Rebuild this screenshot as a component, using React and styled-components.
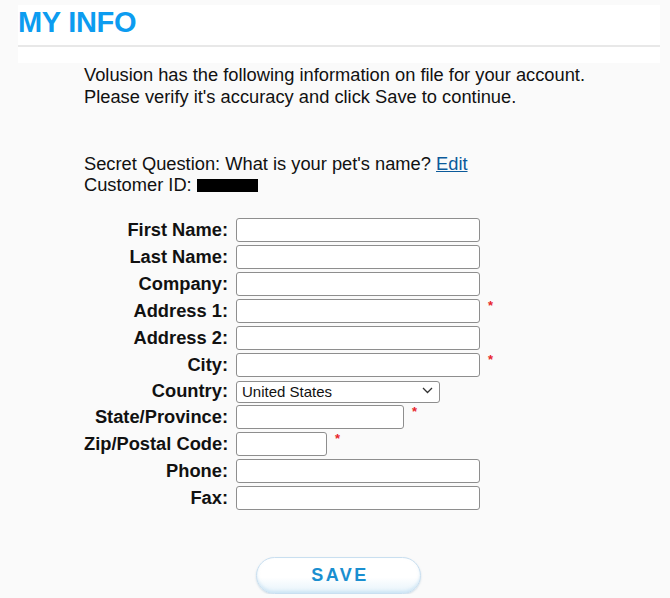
import React from 'react';
import styled, { createGlobalStyle } from 'styled-components';

const GlobalStyle = createGlobalStyle`
  body {
    margin: 0;
    background: #fafafa;
    font-family: "Liberation Sans", Arial, sans-serif;
    color: #111;
  }
`;

const fields = [
  { label: 'First Name:', width: 244 },
  { label: 'Last Name:', width: 244 },
  { label: 'Company:', width: 244 },
  { label: 'Address 1:', width: 244, required: true },
  { label: 'Address 2:', width: 244 },
  { label: 'City:', width: 244, required: true },
  { label: 'Country:', select: true, width: 204 },
  { label: 'State/Province:', width: 168, required: true },
  { label: 'Zip/Postal Code:', width: 91, required: true },
  { label: 'Phone:', width: 244 },
  { label: 'Fax:', width: 244 },
];

function Chevron() {
  return (
    <svg width="11" height="7" viewBox="0 0 11 7" fill="none">
      <path d="M1 1l4.5 4.5L10 1" stroke="#333" strokeWidth="1.3" />
    </svg>
  );
}

export default function App() {
  return (
    <>
      <GlobalStyle />
      <Header>
        <Title>MY INFO</Title>
        <HeaderRule />
      </Header>
      <Content>
        <Intro>
          Volusion has the following information on file for your account.
          <br />
          Please verify it's accuracy and click Save to continue.
        </Intro>
        <AccountInfo>
          Secret Question: What is your pet's name? <EditLink href="#">Edit</EditLink>
          <br />
          Customer ID: <Redacted />
        </AccountInfo>
        <Form>
          {fields.map((f) => (
            <Row key={f.label}>
              <Label>{f.label}</Label>
              <Field>
                {f.select ? (
                  <SelectWrap>
                    <Select $width={f.width} defaultValue="US">
                      <option value="US">United States</option>
                    </Select>
                    <SelectArrow>
                      <Chevron />
                    </SelectArrow>
                  </SelectWrap>
                ) : (
                  <Input type="text" $width={f.width} />
                )}
                {f.required && <Required>*</Required>}
              </Field>
            </Row>
          ))}
        </Form>
        <SaveRow>
          <SaveButton type="button">SAVE</SaveButton>
        </SaveRow>
      </Content>
    </>
  );
}

const Header = styled.div`
  margin: 5px 10px 0 18px;
  background: #fff;
`;

const Title = styled.h1`
  margin: 0;
  height: 40px;
  padding-top: 1px;
  box-sizing: border-box;
  font-size: 29px;
  font-weight: 700;
  line-height: 33px;
  color: #0c9cf0;
  letter-spacing: -0.3px;
`;

const HeaderRule = styled.div`
  height: 16px;
  border-top: 2px solid #e8e8e8;
`;

const Content = styled.div`
  padding-left: 84px;
  font-size: 18.3px;
`;

const Intro = styled.p`
  margin: 1px 0 0;
  line-height: 22px;
`;

const AccountInfo = styled.p`
  margin: 45px 0 0;
  line-height: 21px;
`;

const EditLink = styled.a`
  color: #0b5a9a;
  text-decoration: underline;
`;

const Redacted = styled.span`
  display: inline-block;
  width: 61px;
  height: 13px;
  background: #000;
  vertical-align: -1px;
`;

const Form = styled.div`
  margin-top: 23px;
  display: flex;
  flex-direction: column;
  gap: 3px;
`;

const Row = styled.div`
  display: flex;
  align-items: center;
  gap: 8px;
`;

const Label = styled.div`
  width: 144px;
  height: 22px;
  line-height: 22px;
  text-align: right;
  font-weight: 700;
  white-space: nowrap;
`;

const Field = styled.div`
  display: flex;
  align-items: flex-start;
`;

const Input = styled.input`
  width: ${(p) => p.$width}px;
  height: 24px;
  box-sizing: border-box;
  border: 1px solid #8e8e8e;
  border-radius: 3px;
  background: #fff;
  margin: 0;
`;

const SelectWrap = styled.div`
  position: relative;
  height: 22px;
`;

const Select = styled.select`
  appearance: none;
  width: ${(p) => p.$width}px;
  height: 22px;
  box-sizing: border-box;
  border: 1px solid #8e8e8e;
  border-radius: 3px;
  background: #fff;
  margin: 0;
  padding: 0 24px 0 5px;
  font-family: "Liberation Sans", Arial, sans-serif;
  font-size: 15px;
  color: #111;
`;

const SelectArrow = styled.span`
  position: absolute;
  right: 7px;
  top: 7px;
  display: flex;
  pointer-events: none;
`;

const Required = styled.span`
  margin-left: 8px;
  color: #e8262b;
  font-size: 13px;
  line-height: 14px;
  font-weight: 700;
`;

const SaveRow = styled.div`
  display: flex;
  padding-left: 172px;
  margin-top: 47px;
`;

const SaveButton = styled.button`
  width: 165px;
  height: 37px;
  border: 1px solid #c9dff0;
  border-radius: 19px;
  background: linear-gradient(#ffffff 0%, #ffffff 55%, #e6f3fb 100%);
  box-shadow: 0 1px 2px rgba(120, 160, 190, 0.35), inset 0 -2px 3px rgba(180, 215, 240, 0.5);
  color: #1a8fd0;
  font-family: "Liberation Sans", Arial, sans-serif;
  font-size: 18px;
  font-weight: 700;
  letter-spacing: 2.5px;
  padding: 0 0 0 3px;
`;
